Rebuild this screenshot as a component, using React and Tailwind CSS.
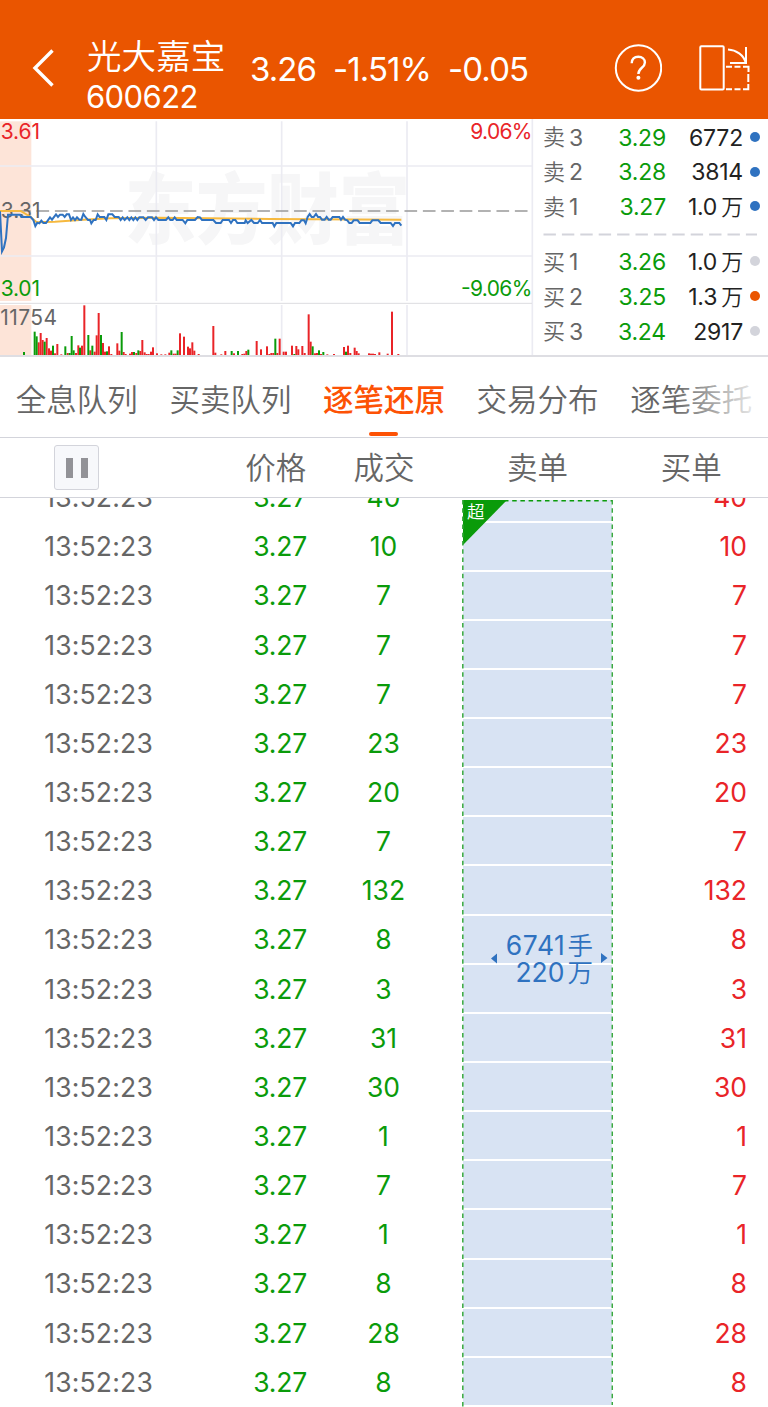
import React from 'react';

// one unit is a third of a pixel, for every coordinate of the chart
const PRICE = '0,280 6,400 12,388 18,360 24,290 60,290 64,297 92,297 100,306 106,324 112,314 118,316 124,308 130,315 138,315 150,298 156,305 168,289 174,297 180,290 188,290 194,297 200,289 207,289 213,306 219,298 225,306 231,298 238,305 244,305 250,288 256,297 264,306 270,306 274,316 281,306 287,306 293,289 299,297 313,297 319,306 325,289 337,289 344,297 356,297 362,306 368,298 374,306 382,298 388,306 394,298 400,306 406,298 412,306 418,298 430,298 437,306 444,298 456,298 462,306 468,298 475,306 498,306 505,298 511,306 518,306 524,298 530,306 548,306 556,316 562,306 585,306 593,297 600,298 606,306 640,306 648,315 662,315 668,306 687,306 693,315 699,306 706,306 712,315 734,315 737,307 743,315 754,306 762,315 773,315 780,306 786,315 818,315 823,325 829,315 872,315 879,325 885,315 898,315 904,307 912,307 917,316 923,297 929,288 935,297 941,297 948,288 954,297 960,297 966,305 974,305 980,297 986,305 992,305 998,297 1018,297 1023,305 1029,297 1035,305 1042,307 1048,315 1055,315 1061,307 1073,307 1079,315 1111,315 1117,307 1135,307 1142,315 1172,315 1179,324 1185,315 1198,315 1204,323';
const AVERAGE = '0,279 62,279 92,297 110,313 165,311 250,305 330,301 470,299 620,301 810,303 1204,305';

const RED_BARS = [
  [116, 38], [122, 66], [128, 45], [140, 51], [147, 20], [153, 13], [165, 5], [172, 33], [184, 2], [203, 6],
  [228, 6], [235, 29], [246, 28], [253, 149], [271, 14], [284, 10], [290, 59], [296, 126], [309, 36], [315, 10],
  [327, 26], [334, 3], [352, 35], [358, 13], [371, 9], [377, 3], [390, 4], [396, 9], [409, 6], [421, 12],
  [427, 45], [434, 8], [440, 3], [446, 3], [453, 10], [459, 23], [471, 5], [484, 2], [496, 2], [508, 7],
  [521, 4], [527, 4], [540, 65], [552, 55], [564, 25], [570, 20], [577, 38], [583, 13], [596, 3], [640, 87],
  [646, 7], [664, 2], [676, 12], [702, 5], [727, 3], [733, 4], [739, 12], [770, 42], [783, 17], [801, 26],
  [808, 3], [814, 6], [820, 6], [832, 6], [839, 49], [851, 10], [858, 10], [876, 28], [889, 27], [895, 17],
  [907, 27], [914, 6], [926, 122], [932, 40], [945, 5], [951, 6], [963, 3], [982, 2], [1002, 3], [1032, 24],
  [1044, 28], [1051, 6], [1064, 22], [1070, 12], [1076, 5], [1107, 5], [1113, 4], [1119, 4], [1125, 3],
  [1138, 8], [1163, 4], [1176, 130], [1195, 3],
];
const GREEN_BARS = [
  [72, 9], [104, 70], [110, 56], [134, 40], [159, 28], [196, 26], [209, 6], [215, 57], [221, 14], [240, 22],
  [265, 60], [277, 28], [303, 60], [321, 11], [365, 69], [402, 9], [415, 14], [514, 14], [533, 14], [695, 12],
  [714, 12], [745, 16], [826, 49], [883, 3], [938, 26], [957, 14], [970, 9], [1038, 10],
];

const ASKS = [
  { name: '卖', level: 3, price: '3.29', size: '6772', dot: 'bg-[#2f72c0]' },
  { name: '卖', level: 2, price: '3.28', size: '3814', dot: 'bg-[#2f72c0]' },
  { name: '卖', level: 1, price: '3.27', size: '1.0', unit: '万', dot: 'bg-[#2f72c0]' },
];
const BIDS = [
  { name: '买', level: 1, price: '3.26', size: '1.0', unit: '万', dot: 'bg-[#d3d4db]' },
  { name: '买', level: 2, price: '3.25', size: '1.3', unit: '万', dot: 'bg-[#ea5500]' },
  { name: '买', level: 3, price: '3.24', size: '2917', dot: 'bg-[#d3d4db]' },
];

const TABS = ['全息队列', '买卖队列', '逐笔还原', '交易分布', '逐笔委托'];
const TRADES = [40, 10, 7, 7, 7, 23, 20, 7, 132, 8, 3, 31, 30, 1, 7, 1, 8, 28, 8];

const Header = () => (
  <header className="h-[119px] bg-[#ea5500] text-white flex items-start">
    <svg className="w-[22px] h-[40px] ml-[32px] mt-[48px] shrink-0" viewBox="0 0 22 40" fill="none" stroke="currentColor" strokeWidth="3.4">
      <path d="M20.500 2.500L3 20L20.500 37.500" />
    </svg>
    <div className="ml-[33px] mt-[36px] w-[163px]">
      <div className="text-[34.600px] leading-[40px] font-[350] whitespace-nowrap">光大嘉宝</div>
      <div className="text-[31px] leading-[42px] tracking-[-0.600px] -ml-px">600622</div>
    </div>
    <div className="mt-[49px] flex text-[33px] leading-[40px] tracking-[-0.900px] whitespace-nowrap">
      <span className="w-[83px]">3.26</span>
      <span className="w-[115px]">-1.51%</span>
      <span>-0.05</span>
    </div>
    <svg className="absolute left-[614px] top-[44px] w-[48px] h-[48px]" viewBox="0 0 48 48" fill="none" stroke="currentColor" strokeWidth="2">
      <circle cx="24.500" cy="24" r="22.700" />
      <path d="M17.700 19.200C17.700 15 20.300 12.700 24.300 12.700C28.200 12.700 30.900 15 30.900 18.500C30.900 24 24.400 23.600 24.400 30" strokeWidth="2.400" />
      <circle cx="24.400" cy="33.700" r="2" fill="currentColor" stroke="none" />
    </svg>
    <svg className="absolute left-[698px] top-[44px] w-[54px] h-[48px]" viewBox="0 0 54 48" fill="none" stroke="currentColor" strokeWidth="2">
      <rect x="2.300" y="2.300" width="23.400" height="43.200" rx="1" />
      <path d="M30 5.500C38.500 6 45.500 11 47.700 18.500M48 3V19H32" />
      <path d="M28 22.700H34M36.500 22.700H42.500M45 22.700H50.500V28M50.300 30V38M50.300 40V45.300H45M42.500 45.300H36.500M34 45.300H28" />
    </svg>
  </header>
);

const Chart = () => (
  <svg className="w-[534px] h-[237px] shrink-0" viewBox="0 3 1602 711">
    <rect x="0" y="10" width="94" height="539" fill="#fde4d8" />
    <rect x="0" y="561" width="94" height="150" fill="#fde4d8" />
    <text x="374" y="360" fontSize="232" fontWeight="900" fill="#f6f6f7" textLength="856" lengthAdjust="spacingAndGlyphs">东方财富</text>
    <g stroke="#ebebf2" strokeWidth="5">
      <path d="M0 144H1596M0 414H1596" />
      <path d="M469 10V549M845 10V549M1221 10V549M469 561V711M845 561V711M1221 561V711" />
      <path d="M1597 3V714" />
    </g>
    <path d="M0 556H1596" stroke="#dcdce0" strokeWidth="3" />
    <path d="M0 279H1590" stroke="#999" strokeWidth="5" strokeDasharray="38 17.200" strokeDashoffset="1" />
    <g fontSize="63">
      <text x="2" y="64" fill="#e92428" textLength="118">3.61</text>
      <text x="2" y="299" fill="#666" textLength="120">3.31</text>
      <text x="2" y="535" fill="#0a9b0a" textLength="118">3.01</text>
      <text x="1597" y="64" fill="#e92428" textAnchor="end" textLength="186">9.06%</text>
      <text x="1597" y="535" fill="#0a9b0a" textAnchor="end" textLength="214">-9.06%</text>
      <text x="1" y="622" fill="#666" textLength="170">11754</text>
    </g>
    <polyline points={AVERAGE} fill="none" stroke="#f6b93f" strokeWidth="6" />
    <polyline points={PRICE} fill="none" stroke="#2f72c0" strokeWidth="6" />
    {RED_BARS.map(([x, h]) => <rect key={x} x={x - 3} y={711 - h} width="6" height={h} fill="#e92428" />)}
    {GREEN_BARS.map(([x, h]) => <rect key={x} x={x - 3} y={711 - h} width="6" height={h} fill="#0a9b0a" />)}
  </svg>
);

const BookRow = ({ row }) => (
  <div className="h-[34.800px] flex items-center text-[23px] pl-[9px] pr-[8px]">
    <span className="w-[60px] flex items-center gap-[4px] text-[#666]">
      <span className="text-[22px] font-[350]">{row.name}</span>{row.level}
    </span>
    <span className="w-[63px] text-right tracking-[-0.200px] text-[#0a9b0a]">{row.price}</span>
    <span className="flex-1 flex items-center justify-end gap-[4px] tracking-[-0.200px] text-[#222]">
      {row.size}{row.unit && <span className="text-[22px] font-[350]">{row.unit}</span>}
    </span>
    <span className={`ml-[7px] w-[10px] h-[10px] rounded-full -translate-y-px ${row.dot}`}></span>
  </div>
);

const OrderBook = () => (
  <div className="flex-1 pt-[1.500px]">
    {ASKS.map((row) => <BookRow key={row.level} row={row} />)}
    <svg className="block w-[214px] h-[20px] ml-[9px]" viewBox="0 0 214 20">
      <path d="M0.500 9.500H214" stroke="#d3d4db" strokeWidth="2" strokeDasharray="12.400 6" />
    </svg>
    {BIDS.map((row) => <BookRow key={row.level} row={row} />)}
  </div>
);

const Tabs = () => (
  <nav className="relative h-[83px] border-t-2 border-b border-t-[#dedee3] border-b-[#d3d4db] grid grid-cols-5 text-[30.500px] text-[#666]">
    {TABS.map((tab) => (
      <div
        key={tab}
        className={`relative flex items-center justify-center pt-[6px] whitespace-nowrap ${tab === '逐笔还原' ? 'text-[#fd5205] font-medium' : 'font-[350]'}`}
      >
        {tab}
        {tab === '逐笔还原' && <span className="absolute bottom-px w-[29px] h-[4px] rounded-full bg-[#fd5205]"></span>}
      </div>
    ))}
    <div className="absolute right-0 top-0 w-[96px] h-full bg-linear-to-r from-transparent to-white"></div>
  </nav>
);

const TableHead = () => (
  <div className="h-[60px] border-b border-[#d3d4db] grid grid-cols-5 items-center text-[30.500px] leading-[40px] font-[350] text-[#666]">
    <div className="flex justify-center">
      <div className="w-[45px] h-[45px] rounded-[3px] border border-[#d3d4db] bg-[#f7f8fb] flex items-center justify-center gap-[8px]">
        <span className="w-[7px] h-[20px] bg-[#929297]"></span>
        <span className="w-[7px] h-[20px] bg-[#929297]"></span>
      </div>
    </div>
    <div className="text-right pr-px">价格</div>
    <div className="text-center">成交</div>
    <div className="text-center">卖单</div>
    <div className="text-center">买单</div>
  </div>
);

// a single sell order that was filled by all of the rows beside it
const SellBlock = () => (
  <div className="relative w-[151px] h-[905px] mt-[2px] ml-[2px]">
    <div className="ml-px w-[149px] h-[905px] overflow-hidden bg-[#d8e3f3]">
      <div className="h-[20.500px]"></div>
      {TRADES.slice(1).map((_, i) => (
        <div key={i} className="h-[49.150px] border-t-2 border-white"></div>
      ))}
    </div>
    <svg className="absolute inset-0 w-[151px] h-[907px]" viewBox="0 0 151 907" fill="none">
      <path d="M1 0H45L1 45Z" fill="#0a9b0a" />
      <path d="M1 0.800H150" stroke="#0a9b0a" strokeWidth="1.500" strokeDasharray="4.500 3.700" />
      <path d="M0.800 0V907M150.300 0V905" stroke="#3aaa3f" strokeWidth="1.500" strokeDasharray="4.500 3.700" />
      <path d="M35 453.500V463.500L29 458.500ZM139 453V463L145.500 458Z" fill="#2f72c0" />
    </svg>
    <span className="absolute left-[5px] top-[2px] text-[17.500px] leading-[20px] font-[350] text-white">超</span>
    <div className="absolute right-[20px] top-[432px] text-[26.500px] leading-[27px] text-[#2f72c0]">
      <div className="flex justify-end items-center gap-[2px]"><span className="tracking-[0.600px]">6741</span><span className="text-[25.500px] font-[350]">手</span></div>
      <div className="flex justify-end items-center gap-[3px]"><span>220</span><span className="text-[25.500px] font-[350]">万</span></div>
    </div>
  </div>
);

const TradeList = () => (
  <div className="h-[909px] overflow-hidden flex text-[26.500px]">
    <div className="w-[460px] -mt-[24.500px]">
      {TRADES.map((qty, i) => (
        <div key={i} className="h-[49.150px] flex items-center text-[#0a9b0a]">
          <span className="w-[153px] text-right tracking-[0.200px] text-[#666]">13:52:23</span>
          <span className="w-[154px] text-right tracking-[-0.200px]">3.27</span>
          <span className="w-[153px] text-center">{qty}</span>
        </div>
      ))}
    </div>
    <SellBlock />
    <div className="flex-1 -mt-[24.500px] pr-[21px]">
      {TRADES.map((qty, i) => (
        <div key={i} className="h-[49.150px] flex items-center justify-end text-[#e92428]">{qty}</div>
      ))}
    </div>
  </div>
);

const App = () => (
  <div className="relative w-[768px] h-[1407px] overflow-hidden bg-white font-[Inter,'Noto_Sans_CJK_SC',sans-serif]">
    <Header />
    <div className="h-[236px] flex">
      <Chart />
      <OrderBook />
    </div>
    <Tabs />
    <TableHead />
    <TradeList />
  </div>
);

export default App;
